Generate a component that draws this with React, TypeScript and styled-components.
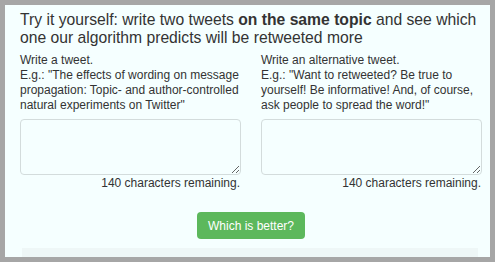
import React from 'react';

import styled, {createGlobalStyle} from 'styled-components';

const GlobalStyle = createGlobalStyle`
  html, body {
    margin: 0;
    padding: 0;
    background: #a6a6a6;
  }
  body {
    font-family: "Liberation Sans", Arial, sans-serif;
    color: #333;
  }
`;

const Frame = styled.div`
  box-sizing: border-box;
  margin: 5px;
  width: 485px;
  height: 252px;
  overflow: hidden;
  background: #f5ffff;
  padding: 6px 8px 0 15px;
  display: flex;
  flex-direction: column;
`;

const Title = styled.h3`
  margin: 0 -8px 6px 0;
  font-size: 15.7px;
  line-height: 18px;
  font-weight: normal;
  color: #333;

  b {
    font-weight: bold;
  }
`;

const Columns = styled.div`
  display: grid;
  grid-template-columns: 221px 221px;
  column-gap: 20px;
`;

const Column = styled.div`
  display: flex;
  flex-direction: column;
`;

const Hint = styled.p`
  margin: 0;
  font-size: 12px;
  line-height: 15px;
  height: 60px;
`;

const TweetBox = styled.textarea`
  box-sizing: border-box;
  margin-top: 6px;
  width: 221px;
  height: 56px;
  border: 1px solid #d3dcdc;
  border-radius: 4px;
  background: transparent;
  font-family: inherit;
  font-size: 12px;
  padding: 4px 6px;
  outline: none;
`;

const Remaining = styled.div`
  text-align: right;
  font-size: 12px;
  line-height: 15px;
  margin-top: 1px;
  padding-right: 1px;
`;

const Actions = styled.div`
  display: flex;
  justify-content: center;
  margin-top: 21px;
`;

const Button = styled.button`
  box-sizing: border-box;
  width: 108px;
  height: 27px;
  border: none;
  border-radius: 4px;
  background: #5cb85c;
  color: #fff;
  font-family: inherit;
  font-size: 12px;
  cursor: pointer;
`;

const Footer = styled.div`
  margin: 9px 4px 0 2px;
  height: 12px;
  background: #eef7f7;
`;

const tweets = [
  {
    label: 'Write a tweet.',
    example:
      'E.g.: "The effects of wording on message propagation: Topic- and author-controlled natural experiments on Twitter"',
  },
  {
    label: 'Write an alternative tweet.',
    example:
      'E.g.: "Want to retweeted? Be true to yourself! Be informative! And, of course, ask people to spread the word!"',
  },
];

function App() {
  return (
    <>
      <GlobalStyle />
      <Frame>
        <Title>
          Try it yourself: write two tweets <b>on the same topic</b> and see which one our algorithm predicts
          will be retweeted more
        </Title>
        <Columns>
          {tweets.map(t => (
            <Column key={t.label}>
              <Hint>
                {t.label}
                <br />
                {t.example}
              </Hint>
              <TweetBox />
              <Remaining>140 characters remaining.</Remaining>
            </Column>
          ))}
        </Columns>
        <Actions>
          <Button>Which is better?</Button>
        </Actions>
        <Footer />
      </Frame>
    </>
  );
}

export default App;
